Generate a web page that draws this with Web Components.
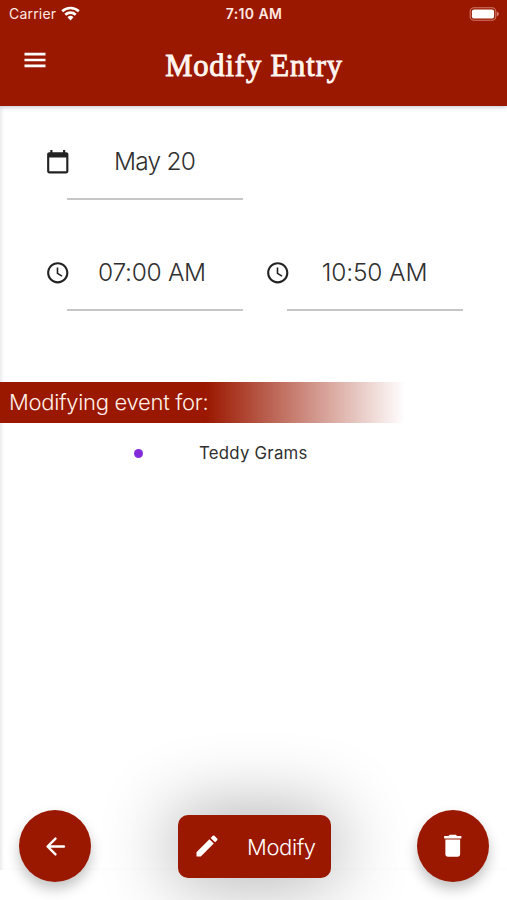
<!DOCTYPE html>
<html lang="en">
<head>
<meta charset="utf-8">
<title>Modify Entry</title>
<style>
html, body { margin: 0; height: 100%; overflow: hidden; background: #fff; }
body { font-family: Inter, "Liberation Sans", sans-serif; --brand: #9b1800; --ink: #303030; }
</style>
</head>
<body>
<entry-screen></entry-screen>
<script>
const define = (name, html) => customElements.define(name, class extends HTMLElement {
  constructor() {
    super();
    this.attachShadow({ mode: 'open' }).innerHTML = html;
  }
});

const ICONS = {
  menu: 'M3 18.2h18v-2.3H3v2.3zm0-5.05h18v-2.3H3v2.3zM3 5.8v2.3h18V5.8H3z',
  calendar: 'M20 3h-1V1h-2v2H7V1H5v2H4c-1.1 0-2 .9-2 2v16c0 1.1.9 2 2 2h16c1.1 0 2-.9 2-2V5c0-1.1-.9-2-2-2zm0 18H4V8h16v13z',
  clock: 'M12 2C6.5 2 2 6.5 2 12s4.5 10 10 10 10-4.5 10-10S17.5 2 12 2zm0 18c-4.42 0-8-3.58-8-8s3.58-8 8-8 8 3.58 8 8-3.58 8-8 8zM12.5 7H11v6l4.6 2.8.8-1.25-3.9-2.3z',
  back: 'M19 11H7.83l4.88-4.88c.39-.39.39-1.03 0-1.42a1 1 0 0 0-1.41 0l-6.59 6.59a1 1 0 0 0 0 1.41l6.59 6.59a1 1 0 0 0 1.41-1.41L7.83 13H19a1 1 0 0 0 0-2z',
  edit: 'M3 17.46v3.04c0 .28.22.5.5.5h3.04c.13 0 .26-.05.35-.15L17.81 9.94l-3.75-3.75L3.15 17.1q-.15.15-.15.36zM20.71 7.04a1 1 0 0 0 0-1.41l-2.34-2.34a1 1 0 0 0-1.41 0l-1.83 1.83 3.75 3.75 1.83-1.83z',
  trash: 'M6 19c0 1.1.9 2 2 2h8c1.1 0 2-.9 2-2V7H6v12zM19 4h-3.5l-1-1h-5l-1 1H5v2h14V4z'
};
customElements.define('ui-icon', class extends HTMLElement {
  constructor() {
    super();
    const size = this.getAttribute('size');
    this.attachShadow({ mode: 'open' }).innerHTML = `
      <style>:host{display:block;flex:none;width:${size}px;height:${size}px}svg{display:block}</style>
      <svg width="${size}" height="${size}" viewBox="0 0 24 24" fill="currentColor"><path d="${ICONS[this.getAttribute('name')]}"/></svg>`;
  }
});

define('status-bar', `
<style>
:host{display:grid;grid-template-columns:1fr auto 1fr;align-items:center;height:27px;padding:0 8px 0 9px;color:#ffe9e2;font-size:14px}
.left{display:flex;align-items:center;gap:5px;letter-spacing:.2px}
.time{font-weight:600;font-size:14px;letter-spacing:.4px}
.battery{justify-self:end}
svg{display:block}
</style>
<div class="left"><span>Carrier</span>
<svg width="19" height="15" viewBox="0 0 19 15" fill="none" stroke="#fff" stroke-width="2.6"><path d="M1.2 5.3a12 12 0 0 1 16.6 0M4.3 8.7a7.5 7.5 0 0 1 10.4 0"/><path d="M9.5 14.4 6.5 11.3a4.3 4.3 0 0 1 6 0z" fill="#fff" stroke="none"/></svg></div>
<span class="time">7:10 AM</span>
<svg class="battery" width="30" height="14" viewBox="0 0 30 14"><rect x="1.2" y=".7" width="25.6" height="12.6" rx="3.8" fill="none" stroke="#d07a6b" stroke-width="1.1"/><rect x="2.9" y="2.4" width="22.2" height="9.2" rx="2.2" fill="#fff"/><path d="M27.8 4.6q2.2.9 2.2 2.4t-2.2 2.4z" fill="#d07a6b"/></svg>`);

define('app-header', `
<style>
:host{display:block;height:106px;background:var(--brand);color:#fff;box-shadow:0 1px 5px rgba(0,0,0,.22);position:relative;z-index:1}
.bar{display:grid;grid-template-columns:1fr auto 1fr;height:78px;align-items:center;padding:0 21px}
ui-icon{margin-bottom:13px}
h1{margin:0;padding-left:1px;font:400 30.5px/36px "Liberation Serif",serif;-webkit-text-stroke:.9px #fff5f0;letter-spacing:.9px;white-space:nowrap;color:#fff5f0}
</style>
<status-bar></status-bar>
<div class="bar"><ui-icon name="menu" size="28"></ui-icon><h1><slot></slot></h1></div>`);

define('picker-field', `
<style>
:host{display:flex;align-items:flex-start;width:198px;color:var(--ink)}
.value{flex:1;border-bottom:2px solid #c6c6c6;height:59.5px;text-align:center;font-size:24.5px;line-height:46px;font-weight:300;letter-spacing:var(--track,0);white-space:nowrap}
.value span{margin-left:var(--shift,0)}
</style>
<slot name="icon"></slot><div class="value"><span><slot></slot></span></div>`);

define('section-banner', `
<style>
:host{display:flex;align-items:center;box-sizing:border-box;width:405px;height:41px;padding:0 0 2px 9px;color:#fff0ea;background:linear-gradient(90deg,var(--brand) 51%,rgba(155,24,0,0));font-size:22px;font-weight:300;letter-spacing:-.3px}
</style><span><slot></slot></span>`);

define('event-item', `
<style>
:host{display:flex;align-items:center;height:26px;padding-left:133.5px;gap:56.5px;color:var(--ink);font-size:16.8px;letter-spacing:.25px}
i{width:9px;height:9px;border-radius:50%;background:#832bd8}
</style><i></i><span><slot></slot></span>`);

define('round-button', `
<style>
:host{display:flex;align-items:center;justify-content:center;width:72px;height:72px;border-radius:50%;background:var(--brand);color:#fff;box-shadow:0 7px 13px rgba(0,0,0,.24)}
</style><slot></slot>`);

define('action-button', `
<style>
:host{display:flex;align-items:center;box-sizing:border-box;width:153px;height:63px;padding-left:15px;gap:26.5px;border-radius:10px;background:var(--brand);color:#fff;font-size:22px;font-weight:300;letter-spacing:-.4px;box-shadow:0 0 72px 6px rgba(0,0,0,.31)}
span{padding-top:2px}
</style><slot name="icon"></slot><span><slot></slot></span>`);

define('entry-screen', `
<style>
:host{display:flex;flex-direction:column;height:900px;width:507px;overflow:hidden;background:#fff}
main{flex:1;margin-bottom:-60px;box-shadow:inset 3px 0 4px -2px rgba(0,0,0,.12)}
.fields{display:grid;grid-template-columns:198px 198px;column-gap:22px;row-gap:49.5px;padding:32px 0 0 45px;height:244px;box-sizing:border-box;align-content:start}
.fields ui-icon{color:#222;margin:11px -3.5px 0 0}
.date{grid-column:1 / 3;--track:-.8px;--shift:-1px}
.start{--track:-.3px;--shift:-6px}
.end{--track:-.15px;--shift:-1px}
section-banner{margin-top:32px}
event-item{margin-top:17px}
footer{display:flex;align-items:center;justify-content:space-between;height:72px;padding:0 18px 18px 19px}
</style>
<app-header>Modify Entry</app-header>
<main>
<div class="fields">
<picker-field class="date"><ui-icon slot="icon" name="calendar" size="25.5"></ui-icon>May 20</picker-field>
<picker-field class="start"><ui-icon slot="icon" name="clock" size="25.5"></ui-icon>07:00 AM</picker-field>
<picker-field class="end"><ui-icon slot="icon" name="clock" size="25.5"></ui-icon>10:50 AM</picker-field>
</div>
<section-banner>Modifying event for:</section-banner>
<event-item>Teddy Grams</event-item>
</main>
<footer>
<round-button><ui-icon name="back" size="29"></ui-icon></round-button>
<action-button><ui-icon slot="icon" name="edit" size="28"></ui-icon>Modify</action-button>
<round-button><ui-icon name="trash" size="29.5"></ui-icon></round-button>
</footer>`);
</script>
</body>
</html>
